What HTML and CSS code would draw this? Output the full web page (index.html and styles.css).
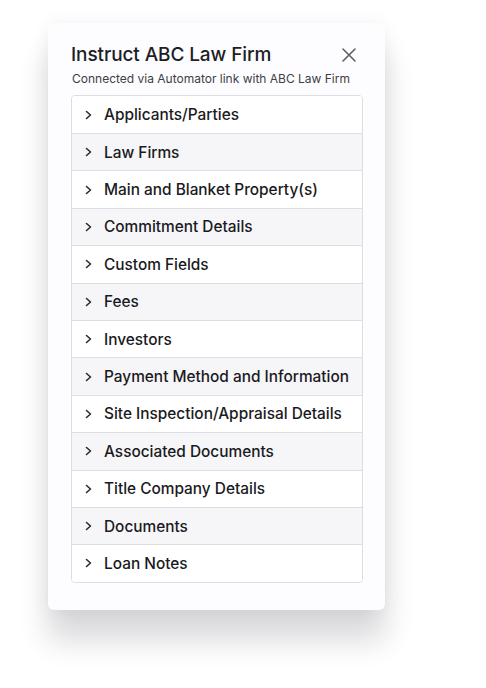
FILE: index.html
```html
<!DOCTYPE html>
<html>
<head>
<meta charset="utf-8">
<link rel="stylesheet" href="styles.css">
</head>
<body>
<div class="card">
  <div class="header">
    <h1 class="title">Instruct ABC Law Firm</h1>
    <button class="close" aria-label="Close">
      <svg width="14" height="14" viewBox="0 0 14 14"><path d="M1 1L13 13M13 1L1 13" stroke="#5f5f66" stroke-width="1.6" stroke-linecap="round"/></svg>
    </button>
    <p class="subtitle">Connected via Automator link with ABC Law Firm</p>
  </div>
  <ul class="list">
    <li class="row"><span class="chev"><svg width="8" height="10" viewBox="0 0 8 10"><path d="M1.5 1.5L5.5 5L1.5 8.5" fill="none" stroke="#2a2a33" stroke-width="1.6" stroke-linecap="round" stroke-linejoin="round"/></svg></span>Applicants/Parties</li>
    <li class="row"><span class="chev"><svg width="8" height="10" viewBox="0 0 8 10"><path d="M1.5 1.5L5.5 5L1.5 8.5" fill="none" stroke="#2a2a33" stroke-width="1.6" stroke-linecap="round" stroke-linejoin="round"/></svg></span>Law Firms</li>
    <li class="row"><span class="chev"><svg width="8" height="10" viewBox="0 0 8 10"><path d="M1.5 1.5L5.5 5L1.5 8.5" fill="none" stroke="#2a2a33" stroke-width="1.6" stroke-linecap="round" stroke-linejoin="round"/></svg></span>Main and Blanket Property(s)</li>
    <li class="row"><span class="chev"><svg width="8" height="10" viewBox="0 0 8 10"><path d="M1.5 1.5L5.5 5L1.5 8.5" fill="none" stroke="#2a2a33" stroke-width="1.6" stroke-linecap="round" stroke-linejoin="round"/></svg></span>Commitment Details</li>
    <li class="row"><span class="chev"><svg width="8" height="10" viewBox="0 0 8 10"><path d="M1.5 1.5L5.5 5L1.5 8.5" fill="none" stroke="#2a2a33" stroke-width="1.6" stroke-linecap="round" stroke-linejoin="round"/></svg></span>Custom Fields</li>
    <li class="row"><span class="chev"><svg width="8" height="10" viewBox="0 0 8 10"><path d="M1.5 1.5L5.5 5L1.5 8.5" fill="none" stroke="#2a2a33" stroke-width="1.6" stroke-linecap="round" stroke-linejoin="round"/></svg></span>Fees</li>
    <li class="row"><span class="chev"><svg width="8" height="10" viewBox="0 0 8 10"><path d="M1.5 1.5L5.5 5L1.5 8.5" fill="none" stroke="#2a2a33" stroke-width="1.6" stroke-linecap="round" stroke-linejoin="round"/></svg></span>Investors</li>
    <li class="row"><span class="chev"><svg width="8" height="10" viewBox="0 0 8 10"><path d="M1.5 1.5L5.5 5L1.5 8.5" fill="none" stroke="#2a2a33" stroke-width="1.6" stroke-linecap="round" stroke-linejoin="round"/></svg></span>Payment Method and Information</li>
    <li class="row"><span class="chev"><svg width="8" height="10" viewBox="0 0 8 10"><path d="M1.5 1.5L5.5 5L1.5 8.5" fill="none" stroke="#2a2a33" stroke-width="1.6" stroke-linecap="round" stroke-linejoin="round"/></svg></span>Site Inspection/Appraisal Details</li>
    <li class="row"><span class="chev"><svg width="8" height="10" viewBox="0 0 8 10"><path d="M1.5 1.5L5.5 5L1.5 8.5" fill="none" stroke="#2a2a33" stroke-width="1.6" stroke-linecap="round" stroke-linejoin="round"/></svg></span>Associated Documents</li>
    <li class="row"><span class="chev"><svg width="8" height="10" viewBox="0 0 8 10"><path d="M1.5 1.5L5.5 5L1.5 8.5" fill="none" stroke="#2a2a33" stroke-width="1.6" stroke-linecap="round" stroke-linejoin="round"/></svg></span>Title Company Details</li>
    <li class="row"><span class="chev"><svg width="8" height="10" viewBox="0 0 8 10"><path d="M1.5 1.5L5.5 5L1.5 8.5" fill="none" stroke="#2a2a33" stroke-width="1.6" stroke-linecap="round" stroke-linejoin="round"/></svg></span>Documents</li>
    <li class="row"><span class="chev"><svg width="8" height="10" viewBox="0 0 8 10"><path d="M1.5 1.5L5.5 5L1.5 8.5" fill="none" stroke="#2a2a33" stroke-width="1.6" stroke-linecap="round" stroke-linejoin="round"/></svg></span>Loan Notes</li>
  </ul>
</div>
</body>
</html>
```
FILE: styles.css
```css
* { box-sizing: border-box; }
html, body { margin: 0; background: #ffffff; }
body {
  font-family: Inter, "Noto Sans", "Liberation Sans", sans-serif;
  padding: 23px 0 0 48px;
  min-height: 688px;
  color: #1e1e26;
}
.card {
  width: 337px;
  background: #fdfcfe;
  border-radius: 6px;
  padding: 21px 22px 27px 23px;
  box-shadow: 0 30px 30px rgba(20, 20, 40, 0.16), 0 0 18px rgba(20, 20, 40, 0.06);
}
.header {
  display: grid;
  grid-template-columns: 1fr auto;
  align-items: start;
}
.title {
  margin: 0;
  font-size: 19px;
  font-weight: 500;
  line-height: 22px;
  letter-spacing: -0.1px;
  color: #1e1e26;
}
.subtitle {
  grid-column: 1 / -1;
  margin: 5px 0 0 1px;
  font-size: 12px;
  line-height: 16px;
  color: #3e3e46;
  white-space: nowrap;
}
.close {
  border: 0;
  background: none;
  padding: 0;
  margin: 4px 7px 0 0;
  width: 14px;
  height: 14px;
  display: flex;
}
.list {
  list-style: none;
  margin: 8px 0 0 0;
  padding: 0;
  border: 1px solid #dddde4;
  border-radius: 4px;
  overflow: hidden;
}
.row {
  display: flex;
  align-items: center;
  height: 37.4px;
  padding-left: 13px;
  font-size: 15.4px;
  font-weight: 500;
  color: #1a1a22;
  background: #ffffff;
  border-top: 1px solid #dddde4;
}
.row:first-child { border-top: 0; height: 37px; }
.row:nth-child(even) { background: #f6f6f9; }
.chev {
  display: flex;
  width: 19px;
}
```
